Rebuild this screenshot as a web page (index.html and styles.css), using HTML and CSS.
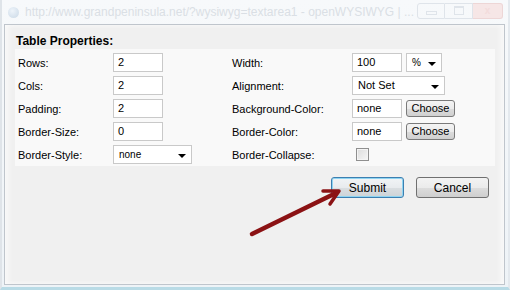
FILE: index.html
```html
<!DOCTYPE html>
<html lang="en">
<head>
    <meta charset="UTF-8">
    <title>Table Properties</title>
    <link rel="stylesheet" href="styles.css">
</head>
<body>
    <div class="window">
        <div class="titlebar">
            <span class="title-icon"></span>
            <span class="title-text">http://www.grandpeninsula.net/?wysiwyg=textarea1 - openWYSIWYG | ...</span>
            <span class="win-btn min"><i></i></span>
            <span class="win-btn max"><i></i></span>
            <span class="win-btn close">x</span>
        </div>

        <div class="client">
            <div class="heading">Table Properties:</div>

            <div class="panel">
                <div class="label">Rows:</div>
                <div class="cell"><div class="field">2</div></div>
                <div class="label">Width:</div>
                <div class="cell">
                    <div class="field">100</div>
                    <div class="select unit">% <span class="caret"></span></div>
                </div>

                <div class="label">Cols:</div>
                <div class="cell"><div class="field">2</div></div>
                <div class="label">Alignment:</div>
                <div class="cell"><div class="select align">Not Set <span class="caret"></span></div></div>

                <div class="label">Padding:</div>
                <div class="cell"><div class="field">2</div></div>
                <div class="label">Background-Color:</div>
                <div class="cell">
                    <div class="field">none</div>
                    <button class="choose-btn">Choose</button>
                </div>

                <div class="label">Border-Size:</div>
                <div class="cell"><div class="field">0</div></div>
                <div class="label">Border-Color:</div>
                <div class="cell">
                    <div class="field">none</div>
                    <button class="choose-btn">Choose</button>
                </div>

                <div class="label">Border-Style:</div>
                <div class="cell"><div class="select style">none <span class="caret"></span></div></div>
                <div class="label">Border-Collapse:</div>
                <div class="cell"><span class="checkbox"></span></div>
            </div>

            <div class="actions">
                <button class="btn submit">Submit</button>
                <button class="btn">Cancel</button>
            </div>
        </div>

        <!-- стрелка-указатель поверх диалога -->
        <svg class="arrow" width="510" height="290" viewBox="0 0 510 290">
            <line x1="252" y1="234" x2="336" y2="193" stroke="#8b1214" stroke-width="4.5" stroke-linecap="round"/>
            <polyline points="323,191 339,191 330,204" fill="none" stroke="#8b1214" stroke-width="3.5" stroke-linecap="round" stroke-linejoin="round"/>
        </svg>
    </div>
</body>
</html>
```

FILE: styles.css
```css
body {
    margin: 0;
    font-family: "Liberation Sans", Arial, sans-serif;
    font-size: 11px;
    color: #000;
    background: #fff;
}

.window {
    position: relative;
    width: 510px;
    height: 290px;
    box-sizing: border-box;
    background: linear-gradient(#f7f9fb, #eef3f7);
    border-left: 2px solid #dfe4e9;
    border-right: 2px solid #e4e9ee;
    border-bottom: 3px solid #b9dbe6;
    overflow: hidden;
}

.titlebar {
    height: 24px;
    display: flex;
    align-items: center;
    padding-left: 6px;
}

.title-icon {
    width: 11px;
    height: 11px;
    border-radius: 50%;
    background: radial-gradient(circle at 40% 35%, #eef4fa, #c9d8e6);
    margin-right: 6px;
}

.title-text {
    font-size: 12px;
    color: #dadfe5;
    white-space: nowrap;
    width: 392px;
}

.win-btn {
    height: 16px;
    margin-top: -3px;
    border: 1px solid #dfe4ea;
    display: flex;
    align-items: center;
    justify-content: center;
    box-sizing: border-box;
}

.win-btn.min {
    width: 28px;
    border-radius: 3px 0 0 3px;
}

.win-btn.min i {
    width: 9px;
    height: 2px;
    margin-top: 4px;
    border: 1px solid #dfe4ea;
}

.win-btn.max {
    width: 28px;
    border-left: none;
}

.win-btn.max i {
    width: 8px;
    height: 6px;
    border: 1px solid #dfe4ea;
    border-top-width: 2px;
}

.win-btn.close {
    width: 30px;
    border-left: none;
    border-radius: 0 3px 3px 0;
    background: #f6e6e6;
    border-color: #edd6d6;
    color: #f3dcdc;
    font-weight: bold;
    font-size: 10px;
}

.client {
    height: 261px;
    margin: 0 3px 0 2px;
    box-sizing: border-box;
    border: 1px solid #bfc5cc;
    background: #f0f0f0;
    box-shadow: inset 4px 0 6px -2px #fcfcfc, inset -4px 0 6px -2px #fcfcfc;
    padding: 0 9px 0 10px;
}

.heading {
    height: 24px;
    box-sizing: border-box;
    padding: 9px 0 0 1px;
    font-weight: bold;
    font-size: 12px;
    line-height: 14px;
}

.panel {
    background: #f9f9f9;
    padding: 4px 0 2px 3px;
    display: grid;
    grid-template-columns: 95px 119px 120px 1fr;
    grid-auto-rows: 19px;
    row-gap: 4px;
    align-items: center;
}

.cell {
    display: flex;
    align-items: center;
    gap: 4px;
    height: 19px;
}

.field {
    width: 50px;
    height: 19px;
    box-sizing: border-box;
    border: 1px solid #c9c9c9;
    background: #fff;
    padding: 0 4px;
    line-height: 17px;
}

.select {
    height: 19px;
    box-sizing: border-box;
    border: 1px solid #c9c9c9;
    background: #fff;
    padding: 0 5px;
    line-height: 17px;
    display: flex;
    align-items: center;
    justify-content: space-between;
    font-size: 10px;
}

.select.unit { width: 36px; }
.select.align { width: 93px; font-size: 11px; }
.select.style { width: 79px; }

.caret {
    width: 0;
    height: 0;
    border-left: 4px solid transparent;
    border-right: 4px solid transparent;
    border-top: 4px solid #000;
    margin-top: 2px;
}

.choose-btn {
    width: 49px;
    height: 17px;
    padding: 0;
    border: 1px solid #7a7a7a;
    border-radius: 3px;
    background: linear-gradient(#f4f4f4 0%, #ebebeb 50%, #dcdcdc 51%, #d0d0d0 100%);
    font-family: inherit;
    font-size: 11px;
    line-height: 13px;
    color: #000;
}

.checkbox {
    width: 13px;
    height: 13px;
    margin-left: 4px;
    box-sizing: border-box;
    border: 1px solid #8f8f8f;
    background: linear-gradient(135deg, #dcdcdc, #f6f6f6);
    box-shadow: inset 0 0 0 1px #f4f4f4;
}

.actions {
    display: flex;
    justify-content: flex-end;
    gap: 12px;
    margin-top: 11px;
    padding-right: 6px;
}

.btn {
    width: 73px;
    height: 21px;
    padding: 0;
    border: 1px solid #707070;
    border-radius: 3px;
    background: linear-gradient(#f3f3f3 0%, #ebebeb 50%, #dddddd 51%, #cfcfcf 100%);
    font-family: inherit;
    font-size: 12px;
    color: #000;
}

.btn.submit {
    border-color: #3c7fb1;
    box-shadow: inset 0 0 0 1px #8fd4f1;
    background: linear-gradient(#f1f4f6 0%, #e8ebee 50%, #dadee1 51%, #cdd3d7 100%);
}

.arrow {
    position: absolute;
    left: -2px;
    top: 0;
    pointer-events: none;
}
```
